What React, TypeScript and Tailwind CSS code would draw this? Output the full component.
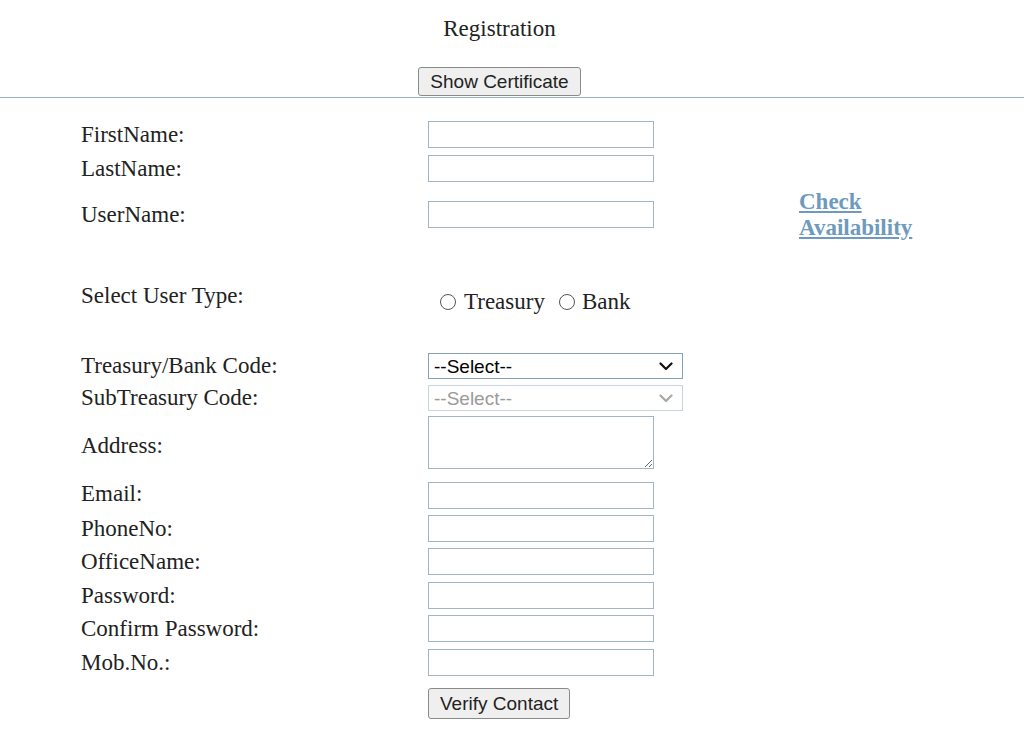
import React from "react";

const serif = "font-['Liberation_Serif','Times_New_Roman',serif]";
const sans = "font-['Liberation_Sans',Arial,sans-serif]";

const Chevron = ({ color }: { color: string }) => (
  <svg width="14" height="9" viewBox="0 0 14 9" className="absolute right-[10px] top-[9px] pointer-events-none">
    <path d="M1.5 1.5 L7 7 L12.5 1.5" fill="none" stroke={color} strokeWidth="2.2" strokeLinecap="round" strokeLinejoin="round" />
  </svg>
);

const TextBox = () => (
  <input
    type="text"
    className="block w-[226px] h-[27px] border border-[#a3b5c1] bg-white px-1 outline-none"
  />
);

const Row = ({ label, mt, children, labelClass }: { label: string; mt: string; children: React.ReactNode; labelClass?: string }) => (
  <div className={`flex items-center ${mt}`}>
    <div className={`w-[347px] text-[23px] leading-[26px] text-[#222] ${labelClass ?? ""}`}>{label}</div>
    {children}
  </div>
);

export default function App() {
  return (
    <div className={`${serif} bg-white min-h-[733px] text-[#222] leading-[26px]`}>
      <div className="text-center pr-[25px]">
        <div className="pt-[15px] text-[23px] leading-[28px]">Registration</div>
        <button
          type="button"
          className={`${sans} mt-[24px] h-[29px] px-[11px] text-[19px] leading-none text-[#222] bg-[#efefef] border border-[#8a8a8a] rounded-[3px] align-top`}
        >
          Show Certificate
        </button>
      </div>
      <hr className="mt-[1px] border-[#97b0c2]" />

      <form className="pl-[81px]">
        <Row label="FirstName:" mt="mt-[23px]">
          <TextBox />
        </Row>
        <Row label="LastName:" mt="mt-[7px]">
          <TextBox />
        </Row>
        <div className="flex items-center mt-[19px] h-[27px]">
          <div className="w-[347px] text-[23px] leading-[26px]">UserName:</div>
          <TextBox />
          <a
            href="#"
            className="ml-[145px] text-[23px] leading-[26px] font-bold text-[#6d9abd] underline"
          >
            Check
            <br />
            Availability
          </a>
        </div>

        <div className="flex items-start mt-[56px]">
          <div className="w-[347px] text-[23px] leading-[24px]">Select User Type:</div>
          <div className="flex items-center pt-[6px] pl-[12px] text-[23px] leading-[24px]">
            <label className="flex items-center">
              <input type="radio" name="utype" className="appearance-none w-[16px] h-[16px] rounded-full border border-[#555] bg-white m-0" />
              <span className="ml-[8px]">Treasury</span>
            </label>
            <label className="flex items-center ml-[14px]">
              <input type="radio" name="utype" className="appearance-none w-[16px] h-[16px] rounded-full border border-[#555] bg-white m-0" />
              <span className="ml-[7px]">Bank</span>
            </label>
          </div>
        </div>

        <Row label="Treasury/Bank Code:" mt="mt-[39px]">
          <div className="relative">
            <select className={`${sans} block appearance-none w-[255px] h-[26px] border border-[#87a2b4] bg-white pl-[5px] text-[19px] leading-none text-black outline-none`}>
              <option>--Select--</option>
            </select>
            <Chevron color="#111" />
          </div>
        </Row>
        <Row label="SubTreasury Code:" mt="mt-[6px]">
          <div className="relative">
            <select disabled className={`${sans} block appearance-none w-[255px] h-[26px] border border-[#cbd5dc] bg-white pl-[5px] text-[19px] leading-none text-[#9a9a9a] outline-none`}>
              <option>--Select--</option>
            </select>
            <Chevron color="#a8a8a8" />
          </div>
        </Row>
        <Row label="Address:" mt="mt-[5px]" labelClass="pt-[6px]">
          <textarea className="block w-[226px] h-[53px] border border-[#a3b5c1] bg-white outline-none resize" />
        </Row>
        <Row label="Email:" mt="mt-[13px]" labelClass="-mt-[3px]">
          <TextBox />
        </Row>
        <Row label="PhoneNo:" mt="mt-[6px]">
          <TextBox />
        </Row>
        <Row label="OfficeName:" mt="mt-[6px]">
          <TextBox />
        </Row>
        <Row label="Password:" mt="mt-[7px]">
          <TextBox />
        </Row>
        <Row label="Confirm Password:" mt="mt-[6px]">
          <TextBox />
        </Row>
        <Row label="Mob.No.:" mt="mt-[7px]">
          <TextBox />
        </Row>
        <div className="flex mt-[12px]">
          <div className="w-[347px]" />
          <button
            type="button"
            className={`${sans} h-[31px] px-[11px] text-[19px] leading-none text-[#222] bg-[#efefef] border border-[#8a8a8a] rounded-[3px]`}
          >
            Verify Contact
          </button>
        </div>
      </form>
    </div>
  );
}
